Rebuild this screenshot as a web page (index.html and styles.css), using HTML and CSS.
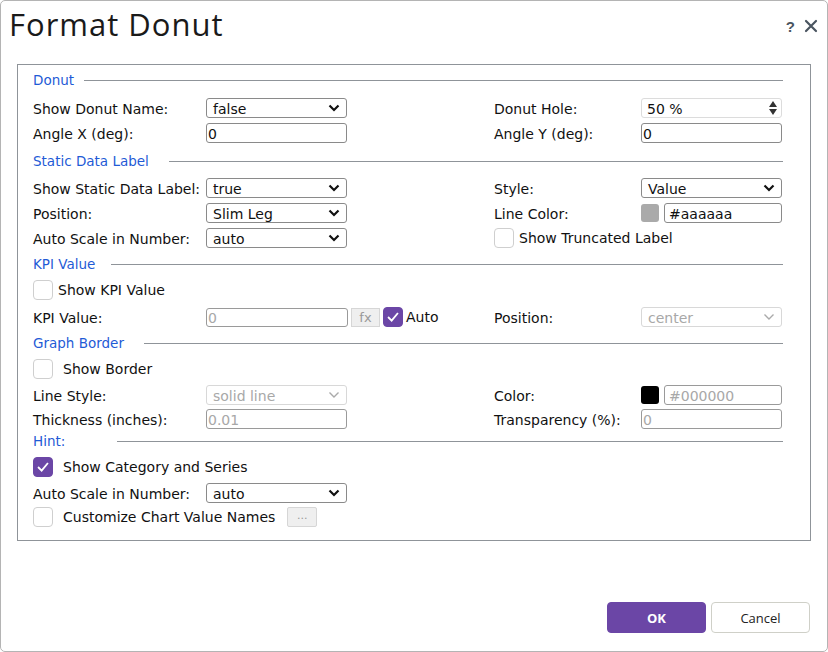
FILE: index.html
```html
<!DOCTYPE html>
<html lang="en">

<head>
    <meta charset="UTF-8">
    <title>Format Donut</title>
    <link rel="stylesheet" href="styles.css">
</head>

<body>
    <div class="dialog">
        <div class="titlebar">
            <h1>Format Donut</h1>
            <div class="tools">
                <span class="help">?</span>
                <svg class="close" width="14" height="14" viewBox="0 0 14 14">
                    <path d="M2 2 L12 12 M12 2 L2 12" stroke="#4a5560" stroke-width="2.2" stroke-linecap="round" />
                </svg>
            </div>
        </div>

        <div class="panel">
            <!-- Donut -->
            <div class="group-title donut"><span>Donut</span><i class="rule"></i></div>
            <div class="row first">
                <label>Show Donut Name:</label>
                <div class="select"><span>false</span><svg class="chev" viewBox="0 0 12 8"><path d="M1.5 1.5 L6 6 L10.5 1.5" /></svg></div>
                <span></span>
                <label>Donut Hole:</label>
                <div class="spin"><span>50 %</span>
                    <svg class="arrows" width="8" height="14" viewBox="0 0 8 14"><path d="M4 0 L8 6 L0 6 Z M0 8 L8 8 L4 14 Z" /></svg>
                </div>
            </div>
            <div class="row">
                <label>Angle X (deg):</label>
                <div class="input">0</div>
                <span></span>
                <label>Angle Y (deg):</label>
                <div class="input">0</div>
            </div>

            <!-- Static Data Label -->
            <div class="group-title static"><span>Static Data Label</span><i class="rule"></i></div>
            <div class="row first">
                <label>Show Static Data Label:</label>
                <div class="select"><span>true</span><svg class="chev" viewBox="0 0 12 8"><path d="M1.5 1.5 L6 6 L10.5 1.5" /></svg></div>
                <span></span>
                <label>Style:</label>
                <div class="select"><span>Value</span><svg class="chev" viewBox="0 0 12 8"><path d="M1.5 1.5 L6 6 L10.5 1.5" /></svg></div>
            </div>
            <div class="row">
                <label>Position:</label>
                <div class="select"><span>Slim Leg</span><svg class="chev" viewBox="0 0 12 8"><path d="M1.5 1.5 L6 6 L10.5 1.5" /></svg></div>
                <span></span>
                <label>Line Color:</label>
                <div class="color-field">
                    <i class="swatch grey"></i>
                    <div class="input">#aaaaaa</div>
                </div>
            </div>
            <div class="row">
                <label>Auto Scale in Number:</label>
                <div class="select"><span>auto</span><svg class="chev" viewBox="0 0 12 8"><path d="M1.5 1.5 L6 6 L10.5 1.5" /></svg></div>
                <span></span>
                <div class="check-line wide"><i class="box"></i><span>Show Truncated Label</span></div>
            </div>

            <!-- KPI Value -->
            <div class="group-title kpi-title"><span>KPI Value</span><i class="rule"></i></div>
            <div class="check-line first"><i class="box"></i><span>Show KPI Value</span></div>
            <div class="row kpi">
                <label>KPI Value:</label>
                <div class="kpi-field">
                    <div class="input disabled">0</div>
                    <span class="fx">fx</span>
                    <div class="check-line"><i class="box on"><svg viewBox="0 0 20 20"><path d="M4.5 10 L8.5 14 L15.5 5.5" /></svg></i><span class="tight">Auto</span></div>
                </div>
                <label>Position:</label>
                <div class="select disabled"><span>center</span><svg class="chev" viewBox="0 0 12 8"><path d="M1.5 1.5 L6 6 L10.5 1.5" /></svg></div>
            </div>

            <!-- Graph Border -->
            <div class="group-title border-title"><span>Graph Border</span><i class="rule"></i></div>
            <div class="check-line first"><i class="box"></i><span class="far">Show Border</span></div>
            <div class="row line-style">
                <label>Line Style:</label>
                <div class="select disabled"><span>solid line</span><svg class="chev" viewBox="0 0 12 8"><path d="M1.5 1.5 L6 6 L10.5 1.5" /></svg></div>
                <span></span>
                <label>Color:</label>
                <div class="color-field">
                    <i class="swatch black"></i>
                    <div class="input disabled">#000000</div>
                </div>
            </div>
            <div class="row thickness">
                <label>Thickness (inches):</label>
                <div class="input disabled">0.01</div>
                <span></span>
                <label>Transparency (%):</label>
                <div class="input disabled">0</div>
            </div>

            <!-- Hint -->
            <div class="group-title hint"><span>Hint:</span><i class="rule"></i></div>
            <div class="check-line first"><i class="box on"><svg viewBox="0 0 20 20"><path d="M4.5 10 L8.5 14 L15.5 5.5" /></svg></i><span class="far">Show Category and Series</span></div>
            <div class="row hint-scale">
                <label>Auto Scale in Number:</label>
                <div class="select"><span>auto</span><svg class="chev" viewBox="0 0 12 8"><path d="M1.5 1.5 L6 6 L10.5 1.5" /></svg></div>
            </div>
            <div class="check-line names"><i class="box"></i><span class="far">Customize Chart Value Names</span><span class="dots">...</span></div>
        </div>

        <div class="footer">
            <button class="btn primary">OK</button>
            <button class="btn">Cancel</button>
        </div>
    </div>
</body>

</html>
```

FILE: styles.css
```css
html,
body {
    margin: 0;
    padding: 0;
}

body {
    font-family: "DejaVu Sans", Verdana, sans-serif;
    font-size: 14px;
    color: #111;
    background: #fff;
}

.dialog {
    box-sizing: border-box;
    width: 828px;
    height: 652px;
    border: 1px solid #b4b4b4;
    border-radius: 5px;
    display: flex;
    flex-direction: column;
}

.titlebar {
    display: flex;
    align-items: center;
    justify-content: space-between;
    height: 46px;
    padding: 0 9px 0 8px;
}

.titlebar h1 {
    margin: 0;
    font-family: "Open Sans", "Noto Sans", sans-serif;
    font-weight: 400;
    font-size: 31px;
    letter-spacing: 1px;
    color: #1a1a1a;
}

.tools {
    display: flex;
    align-items: center;
    gap: 9px;
    padding-top: 4px;
}

.help {
    font-family: "Liberation Sans", sans-serif;
    font-weight: bold;
    font-size: 15px;
    color: #4a5560;
}

.close {
    display: block;
}

.panel {
    margin: 17px 16px 0 16px;
    border: 1px solid #8f9499;
    padding: 6px 27px 13px 15px;
}

/* section headings with a rule running to the right */
.group-title {
    display: flex;
    align-items: center;
    height: 18px;
    margin-top: 7px;
    color: #1f5bd6;
    font-size: 13.5px;
}

.group-title .rule {
    flex: 1;
    height: 1px;
    background: #8f9499;
    margin-left: 20px;
}

.group-title.donut {
    margin-top: 0;
}

.group-title.donut .rule {
    margin-left: 10px;
}

.group-title.static {
    margin-top: 9px;
}

.group-title.kpi-title .rule {
    margin-left: 16px;
}

.group-title.hint {
    margin-top: 3px;
}

.group-title.hint .rule {
    margin-left: 52px;
}

.row {
    display: grid;
    grid-template-columns: 173px 141px 147px 147px 141px;
    align-items: center;
    height: 20px;
    margin-top: 5px;
}

.row.first,
.check-line.first {
    margin-top: 7px;
}

.donut + .row.first {
    margin-top: 9px;
}

.static + .row.first {
    margin-top: 8px;
}

.row.kpi {
    grid-template-columns: 173px 288px 147px 141px;
    margin-top: 7px;
}

.row.line-style,
.row.hint-scale {
    margin-top: 6px;
}

.row.thickness,
.check-line.names {
    margin-top: 4px;
}

.row label {
    white-space: nowrap;
    padding-top: 2px;
}

.select,
.input,
.spin {
    box-sizing: border-box;
    height: 20px;
    border: 1px solid #8a8a8a;
    border-radius: 3px;
    display: flex;
    align-items: center;
    justify-content: space-between;
    background: #fff;
    white-space: nowrap;
    overflow: hidden;
    padding-top: 2px;
}

.select {
    padding-left: 6px;
    padding-right: 6px;
}

.select .chev {
    margin-top: -2px;
}

.input {
    padding-left: 1px;
    padding-right: 1px;
}

.input.disabled {
    border-color: #9a9a9a;
    color: #a8a8a8;
}

.select.disabled {
    border-color: #d8d8d8;
    color: #a8a8a8;
}

.chev {
    width: 12px;
    height: 8px;
    fill: none;
    stroke: #111;
    stroke-width: 2.2;
}

.select.disabled .chev {
    stroke: #aaa;
    stroke-width: 1.4;
}

.spin {
    border-color: #dcdcdc;
    padding-left: 5px;
    padding-right: 4px;
}

.spin .arrows {
    margin-top: -2px;
    fill: #333;
}

.color-field {
    display: flex;
    align-items: center;
    gap: 5px;
}

.color-field .input {
    flex: 1;
    padding-left: 4px;
}

.swatch {
    width: 18px;
    height: 18px;
    border-radius: 3px;
    flex: none;
}

.swatch.grey {
    background: #aaaaaa;
}

.swatch.black {
    background: #000;
}

.check-line {
    display: flex;
    align-items: center;
    height: 20px;
    margin-top: 5px;
}

.check-line.wide {
    grid-column: 4 / span 2;
    margin-top: 0;
}

.check-line span {
    margin-left: 5px;
}

.check-line span.far {
    margin-left: 10px;
}

.check-line span.tight {
    margin-left: 3px;
}

.box {
    box-sizing: border-box;
    width: 20px;
    height: 20px;
    border: 1px solid #cfcfcf;
    border-radius: 4px;
    background: #fff;
    flex: none;
    display: block;
}

.box.on {
    background: #6b46a6;
    border-color: #6b46a6;
}

.box svg {
    display: block;
    width: 18px;
    height: 18px;
    fill: none;
    stroke: #fff;
    stroke-width: 2;
}

.kpi-field {
    display: flex;
    align-items: center;
    gap: 3px;
}

.kpi-field .input {
    width: 142px;
    height: 19px;
    padding-left: 1px;
}

.fx {
    box-sizing: border-box;
    width: 29px;
    height: 19px;
    border: 1px solid #d6d6d6;
    background: #efefef;
    color: #999;
    text-align: center;
    line-height: 17px;
    font-size: 13px;
}

.kpi-field .check-line {
    margin-top: 0;
}

.dots {
    box-sizing: border-box;
    width: 30px;
    height: 20px;
    margin-left: 12px !important;
    border: 1px solid #d6d6d6;
    border-radius: 2px;
    background: #efefef;
    color: #999;
    text-align: center;
    line-height: 16px;
    font-size: 11px;
}

.footer {
    margin-top: auto;
    display: flex;
    justify-content: flex-end;
    gap: 5px;
    padding: 0 17px 18px 0;
}

.btn {
    box-sizing: border-box;
    width: 99px;
    height: 31px;
    border: 1px solid #cfd0c8;
    border-radius: 4px;
    background: #fff;
    color: #222;
    font-family: "Open Sans", "Noto Sans", sans-serif;
    font-size: 13px;
    cursor: pointer;
}

.btn.primary {
    background: #6b46a6;
    border-color: #6b46a6;
    color: #fff;
    font-weight: bold;
}
```
